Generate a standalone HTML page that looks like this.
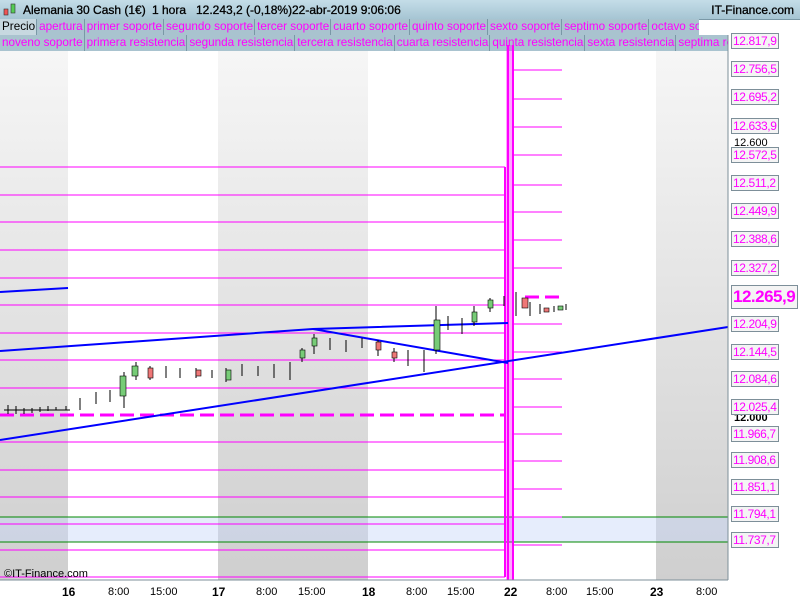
<!DOCTYPE html><html><head><meta charset="utf-8"><style>
body{margin:0;width:800px;height:600px;overflow:hidden;background:#fff;font-family:"Liberation Sans",sans-serif;position:relative}
.top{position:absolute;left:0;top:0;width:800px;height:19px;background:linear-gradient(#c4dde8,#a6c5d3);border-bottom:1px solid #7a98a6}
.top span{position:absolute;top:3px;font-size:12px;color:#000;-webkit-text-stroke:0.3px #000}
.row{position:absolute;left:0;height:16px;width:728px;background:#9db8c4;overflow:hidden;white-space:nowrap;font-size:0}
.row b{display:inline-block;font-weight:normal;font-size:11.7px;color:#f0f;background:#a9c3cf;border-right:1px solid #7a98a6;padding:0 1px 0 2px;height:16px;line-height:16px}
.lab{position:absolute;left:731px;width:48px;height:16px;border:1px solid #7d8f99;background:#f4f4f4;color:#f0f;font-size:12px;line-height:15px;padding-left:1px;box-sizing:border-box;letter-spacing:-0.4px;white-space:nowrap;overflow:hidden}
.ax{position:absolute;font-size:11px}
</style></head><body>
<div class="top"><span style="left:23px">Alemania 30 Cash (1€)</span><span style="left:152px">1 hora</span><span style="left:196px">12.243,2 (-0,18%)</span><span style="left:292px">22-abr-2019 9:06:06</span><span style="right:6px">IT-Finance.com</span>
<svg style="position:absolute;left:3px;top:3px" width="14" height="14"><rect x="1" y="6" width="4" height="6" fill="#e55" stroke="#333" stroke-width=".6"/><rect x="8" y="1" width="4" height="9" fill="#5c5" stroke="#333" stroke-width=".6"/></svg></div>
<div class="row" style="top:19px;width:699px"><b style="color:#000;background:#c7d8e0">Precio</b><b>apertura</b><b>primer soporte</b><b>segundo soporte</b><b>tercer soporte</b><b>cuarto soporte</b><b>quinto soporte</b><b>sexto soporte</b><b>septimo soporte</b><b>octavo soporte</b></div>
<div class="row" style="top:35px"><b>noveno soporte</b><b>primera resistencia</b><b>segunda resistencia</b><b>tercera resistencia</b><b>cuarta resistencia</b><b>quinta resistencia</b><b>sexta resistencia</b><b>septima resistencia</b></div>
<svg style="position:absolute;left:0;top:0" width="800" height="600">
<defs><linearGradient id="g" x1="0" x2="0" y1="0" y2="1"><stop offset="0" stop-color="#f6f6f6"/><stop offset="1" stop-color="#cfcfcf"/></linearGradient></defs>
<rect x="0" y="51" width="68" height="529" fill="url(#g)"/><rect x="218" y="51" width="150" height="529" fill="url(#g)"/><rect x="656" y="51" width="72" height="529" fill="url(#g)"/>
<rect x="0" y="517" width="728" height="25" fill="#c8d8f8" opacity=".45"/>
<line x1="0" y1="517" x2="728" y2="517" stroke="#080" /><line x1="0" y1="542" x2="728" y2="542" stroke="#080"/>
<g stroke="#f0f" stroke-width="1">
<path d="M0 167H505M0 195H505M0 222H505M0 250H505M0 278H505M0 305H505M0 333H505M0 360H505M0 388H505M0 442H505M0 470H505M0 497H505M0 524H505M0 550H505M0 577H505"/>
<path d="M513 70H562M513 99H562M513 127H562M513 155H562M513 185H562M513 212H562M513 240H562M513 268H562M513 324H562M513 352H562M513 379H562M513 407H562M513 434H562M513 461H562M513 489H562M513 517H562M513 545H562"/>
<path d="M0 415H505" stroke-width="3" stroke-dasharray="14 6"/><path d="M525 297H562" stroke-width="3" stroke-dasharray="14 6"/>
<path d="M505 167V577M513 45V580M508 45V580" stroke-width="2"/>
</g>
<rect x="506" y="45" width="8" height="535" fill="#f0f" opacity=".35"/>
<g stroke="#00f" stroke-width="2" fill="none"><path d="M0 292L68 288"/><path d="M0 351L313 329L508 323"/><path d="M313 329L508 363"/><path d="M0 440L728 327"/></g>
<g stroke="#000" stroke-width="1">
<path d="M8 405V414M16 406V414M24 408V414M32 408V413M40 407V412M48 406V411M56 407V410M66 406V410M80 398V410M96 392V404M110 390V402M124 372V408M136 362V380M150 366V380M166 366V378M180 368V378M196 368V378M212 370V378M226 368V382M242 364V376M258 366V376M274 364V378M290 362V380M302 348V362M314 334V354M330 338V350M346 340V352M362 338V348M378 340V356M394 348V362M408 350V366M424 350V372M436 306V354M448 316V330M462 318V334M474 306V326M490 298V312M504 296V306M516 292V316M530 302V316M540 304V314M554 306V312M566 304V310"/>
<path d="M4 410H70"/>
</g>
<g stroke="#000" stroke-width=".6">
<rect x="120" y="376" width="6" height="20" fill="#7c7"/><rect x="132" y="366" width="6" height="10" fill="#7c7"/><rect x="148" y="368" width="5" height="10" fill="#e77"/><rect x="196" y="370" width="5" height="6" fill="#e77"/><rect x="226" y="370" width="5" height="10" fill="#7c7"/><rect x="300" y="350" width="5" height="8" fill="#7c7"/><rect x="312" y="338" width="5" height="8" fill="#7c7"/><rect x="376" y="342" width="5" height="8" fill="#e77"/><rect x="392" y="352" width="5" height="6" fill="#e77"/><rect x="434" y="320" width="6" height="30" fill="#7c7"/><rect x="472" y="312" width="5" height="10" fill="#7c7"/><rect x="488" y="300" width="5" height="8" fill="#7c7"/><rect x="522" y="298" width="6" height="10" fill="#e77"/><rect x="544" y="308" width="5" height="4" fill="#e77"/><rect x="558" y="306" width="5" height="4" fill="#7c7"/>
</g>
<line x1="728" y1="35" x2="728" y2="580" stroke="#7d8f99"/><line x1="0" y1="580" x2="728" y2="580" stroke="#7d8f99"/>
<g fill="#000" font-size="11" font-family="Liberation Sans"><text x="734" y="146">12.600</text><text x="734" y="240">12.400</text><text x="734" y="421" font-weight="bold">12.000</text></g>
</svg>
<div class="lab" style="top:33px">12.817,9</div><div class="lab" style="top:61px">12.756,5</div><div class="lab" style="top:89px">12.695,2</div><div class="lab" style="top:118px">12.633,9</div><div class="lab" style="top:147px">12.572,5</div><div class="lab" style="top:175px">12.511,2</div><div class="lab" style="top:203px">12.449,9</div><div class="lab" style="top:231px">12.388,6</div><div class="lab" style="top:260px">12.327,2</div>
<div class="lab" style="top:285px;height:24px;font-size:17px;font-weight:bold;line-height:22px;width:67px;letter-spacing:-0.5px">12.265,9</div>
<div class="lab" style="top:316px">12.204,9</div><div class="lab" style="top:344px">12.144,5</div><div class="lab" style="top:371px">12.084,6</div><div class="lab" style="top:399px">12.025,4</div><div class="lab" style="top:426px">11.966,7</div><div class="lab" style="top:452px">11.908,6</div><div class="lab" style="top:479px">11.851,1</div><div class="lab" style="top:506px">11.794,1</div><div class="lab" style="top:532px">11.737,7</div>
<div class="ax" style="left:4px;top:568px">©IT-Finance.com</div>
<div class="ax" style="left:62px;top:585px;font-weight:bold;font-size:12px">16</div><div class="ax" style="left:108px;top:586px">8:00</div><div class="ax" style="left:150px;top:586px">15:00</div>
<div class="ax" style="left:212px;top:585px;font-weight:bold;font-size:12px">17</div><div class="ax" style="left:256px;top:586px">8:00</div><div class="ax" style="left:298px;top:586px">15:00</div>
<div class="ax" style="left:362px;top:585px;font-weight:bold;font-size:12px">18</div><div class="ax" style="left:406px;top:586px">8:00</div><div class="ax" style="left:447px;top:586px">15:00</div>
<div class="ax" style="left:504px;top:585px;font-weight:bold;font-size:12px">22</div><div class="ax" style="left:546px;top:586px">8:00</div><div class="ax" style="left:586px;top:586px">15:00</div>
<div class="ax" style="left:650px;top:585px;font-weight:bold;font-size:12px">23</div><div class="ax" style="left:696px;top:586px">8:00</div>
</body></html>
